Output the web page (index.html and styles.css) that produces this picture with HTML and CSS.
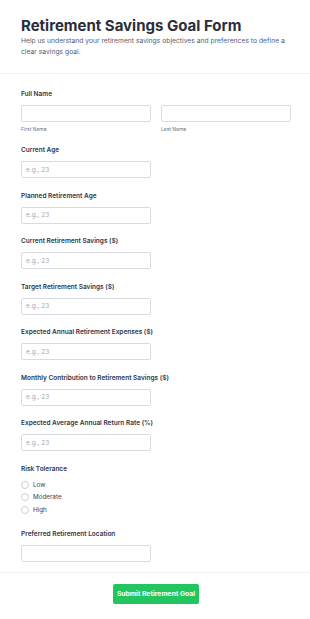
FILE: index.html
```html
<!DOCTYPE html>
<html lang="en">
<head>
  <meta charset="UTF-8">
  <title>Retirement Savings Goal Form</title>
  <link rel="stylesheet" href="styles.css">
</head>
<body>
  <div class="header">
    <h1 class="title">Retirement Savings Goal Form</h1>
    <p class="subtitle">Help us understand your retirement savings objectives and preferences to define a clear savings goal.</p>
  </div>

  <form class="form-body">
    <div class="field">
      <label class="label">Full Name</label>
      <div class="name-row">
        <div>
          <input type="text" class="input">
          <span class="sublabel">First Name</span>
        </div>
        <div>
          <input type="text" class="input">
          <span class="sublabel">Last Name</span>
        </div>
      </div>
    </div>

    <div class="field">
      <label class="label">Current Age</label>
      <input type="number" class="input short" placeholder="e.g., 23">
    </div>

    <div class="field">
      <label class="label">Planned Retirement Age</label>
      <input type="number" class="input short" placeholder="e.g., 23">
    </div>

    <div class="field">
      <label class="label">Current Retirement Savings ($)</label>
      <input type="number" class="input short" placeholder="e.g., 23">
    </div>

    <div class="field">
      <label class="label">Target Retirement Savings ($)</label>
      <input type="number" class="input short" placeholder="e.g., 23">
    </div>

    <div class="field">
      <label class="label">Expected Annual Retirement Expenses ($)</label>
      <input type="number" class="input short" placeholder="e.g., 23">
    </div>

    <div class="field">
      <label class="label">Monthly Contribution to Retirement Savings ($)</label>
      <input type="number" class="input short" placeholder="e.g., 23">
    </div>

    <div class="field">
      <label class="label">Expected Average Annual Return Rate (%)</label>
      <input type="number" class="input short" placeholder="e.g., 23">
    </div>

    <div class="field radios">
      <label class="label">Risk Tolerance</label>
      <label class="radio"><input type="radio" name="risk"><span>Low</span></label>
      <label class="radio"><input type="radio" name="risk"><span>Moderate</span></label>
      <label class="radio"><input type="radio" name="risk"><span>High</span></label>
    </div>

    <div class="field last">
      <label class="label">Preferred Retirement Location</label>
      <input type="text" class="input short">
    </div>
  </form>

  <div class="footer">
    <button type="button" class="submit">Submit Retirement Goal</button>
  </div>
</body>
</html>
```

FILE: styles.css
```css
body {
  margin: 0;
  font-family: Inter, "Noto Sans", sans-serif;
  background-color: #ffffff;
  color: #2b3040;
}
.header {
  padding: 15.5px 19px 16.5px 21px;
  border-bottom: 1px solid #eeeff2;
}
.title {
  margin: 0;
  font-size: 15px;
  line-height: 19px;
  font-weight: 700;
  color: #2a2e3b;
}
.subtitle {
  margin: 0;
  font-size: 6.75px;
  line-height: 11px;
  color: #566075;
}
.form-body {
  padding: 15px 19px 10px 21px;
  border-bottom: 1px solid #eeeff2;
}
.field {
  margin-bottom: 12.5px;
}
.field.last {
  margin-bottom: 0;
}
.label {
  display: block;
  font-size: 6.5px;
  line-height: 10px;
  font-weight: 600;
  color: #2f3648;
  margin-bottom: 6px;
}
.name-row {
  display: grid;
  grid-template-columns: 1fr 1fr;
  gap: 10px;
}
.input {
  display: block;
  box-sizing: border-box;
  width: 100%;
  height: 17px;
  margin: 0;
  padding: 0 4px;
  border: 1px solid #d8dbe2;
  border-radius: 2px;
  font-family: inherit;
  font-size: 6.5px;
  color: #2b3040;
  background: #fff;
}
.input::placeholder {
  color: #a3a9b4;
}
.input.short {
  width: 130px;
}
.sublabel {
  display: block;
  margin-top: 3.5px;
  font-size: 5px;
  line-height: 7px;
  color: #6b7280;
}
.radios .label {
  margin-bottom: 5px;
}
.radio {
  display: flex;
  align-items: center;
  height: 12.5px;
  font-size: 6.3px;
  color: #3a4254;
}
.radio input {
  appearance: none;
  box-sizing: border-box;
  width: 8px;
  height: 8px;
  margin: 0 4px 0 0;
  border: 1px solid #cdd0d7;
  border-radius: 50%;
  background: #fff;
}
.footer {
  display: flex;
  justify-content: center;
  padding: 11px 19px 12px 21px;
}
.submit {
  height: 20px;
  width: 86px;
  padding: 0;
  border: none;
  border-radius: 2px;
  background-color: #22c55e;
  color: #ffffff;
  font-family: inherit;
  font-size: 6.8px;
  font-weight: 700;
  cursor: pointer;
}
```
